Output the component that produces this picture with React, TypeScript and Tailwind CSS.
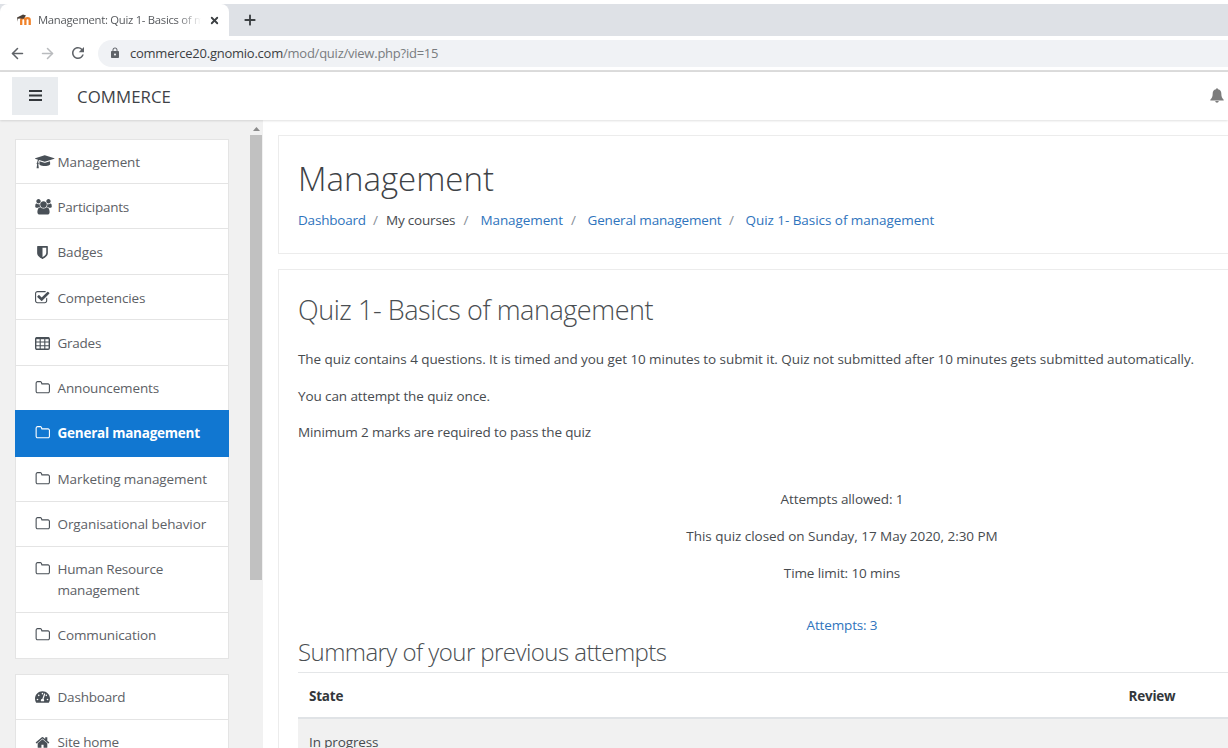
import React from "react";
import { FaTachometerAlt } from "react-icons/fa";
import { ArrowLeft, ArrowRight, X, Plus } from "lucide-react";
import { MdRefresh, MdLock } from "react-icons/md";

const folder =
  "M1600 1312v-704q0-40-28-68t-68-28h-704q-40 0-68-28t-28-68v-64q0-40-28-68t-68-28h-320q-40 0-68 28t-28 68v960q0 40 28 68t68 28h1216q40 0 68-28t28-68zm128-704v704q0 92-66 158t-158 66h-1216q-92 0-158-66t-66-158v-960q0-92 66-158t158-66h320q92 0 158 66t66 158v32h672q92 0 158 66t66 158z";
const cap =
  "M1774 836l18 316q4 69-82 128t-235 93.5-323 34.5-323-34.5-235-93.5-82-128l18-316 574 181q22 7 48 7t48-7zm530-324q0 23-22 31l-1120 352q-4 1-10 1t-10-1l-652-206q-43 34-71 111.5t-34 178.5q63 36 63 109 0 69-58 107l58 433q2 14-8 25-9 11-24 11h-192q-15 0-24-11-10-11-8-25l58-433q-58-38-58-107 0-73 65-111 11-207 98-330l-333-104q-22-8-22-31t22-31l1120-352q4-1 10-1t10 1l1120 352q22 8 22 31z";
const users =
  "M593 896q-162 5-265 128h-134q-82 0-138-40.5t-56-118.5q0-353 124-353 6 0 43.5 21t97.5 42.5 119 21.5q67 0 133-23-5 37-5 66 0 139 81 256zm1071 637q0 120-73 189.5t-194 69.5h-874q-121 0-194-69.5t-73-189.5q0-53 3.5-103.5t14-109 26.5-108.5 43-97.5 62-81 85.5-53.5 111.5-20q10 0 43 21.5t73 48 107 48 135 21.5 135-21.5 107-48 73-48 43-21.5q61 0 111.5 20t85.5 53.5 62 81 43 97.5 26.5 108.5 14 109 3.5 103.5zm-1024-1277q0 106-75 181t-181 75-181-75-75-181 75-181 181-75 181 75 75 181zm704 384q0 159-112.5 271.5t-271.5 112.5-271.5-112.5-112.5-271.5 112.5-271.5 271.5-112.5 271.5 112.5 112.5 271.5zm576 225q0 78-56 118.5t-138 40.5h-134q-103-123-265-128 81-117 81-256 0-29-5-66 66 23 133 23 59 0 119-21.5t97.5-42.5 43.5-21q124 0 124 353zm-128-609q0 106-75 181t-181 75-181-75-75-181 75-181 181-75 181 75 75 181z";
const shield =
  "M1344 960v-640h-448v1137q119-63 213-137 235-184 235-360zm192-768v768q0 86-33.5 170.5t-83 150-118 127.5-126.5 103-121 77.5-89.5 49.5-42.5 20q-12 6-26 6t-26-6q-16-7-42.5-20t-89.5-49.5-121-77.5-126.5-103-118-127.5-83-150-33.5-170.5v-768q0-26 19-45t45-19h1152q26 0 45 19t19 45z";
const check =
  "M1472 930v318q0 119-84.5 203.5t-203.5 84.5h-832q-119 0-203.5-84.5t-84.5-203.5v-832q0-119 84.5-203.5t203.5-84.5h832q63 0 117 25 15 7 18 23 3 17-9 29l-49 49q-10 10-23 10-3 0-9-2-23-6-45-6h-832q-66 0-113 47t-47 113v832q0 66 47 113t113 47h832q66 0 113-47t47-113v-254q0-13 9-22l64-64q10-10 23-10 6 0 12 3 20 8 20 29zm231-489l-814 814q-24 24-57 24t-57-24l-430-430q-24-24-24-57t24-57l110-110q24-24 57-24t57 24l263 263 647-647q24-24 57-24t57 24l110 110q24 24 24 57t-24 57z";
const home =
  "M1472 992v480q0 26-19 45t-45 19h-384v-384h-256v384h-384q-26 0-45-19t-19-45v-480q0-1 .5-3t.5-3l575-474 575 474q1 2 1 6zm223-69l-62 74q-8 9-21 11h-3q-13 0-21-7l-692-577-692 577q-12 8-24 7-13-2-21-11l-62-74q-8-10-7-23.5t11-21.5l719-599q32-26 76-26t76 26l244 204v-195q0-14 9-23t23-9h192q14 0 23 9t9 23v408l219 182q10 8 11 21.5t-7 23.5z";

function Glyph({ d, box, cls }: { d: string; box: string; cls: string }) {
  return (
    <svg viewBox={box} className={cls} fill="currentColor">
      <path d={d} />
    </svg>
  );
}

const Folder = () => <Glyph d={folder} box="0 0 1728 1792" cls="w-[15px] h-[15.5px]" />;

const Table = () => (
  <svg viewBox="0 0 15 13" className="w-[15px] h-[13px]" fill="none" stroke="currentColor">
    <rect x="0.7" y="0.7" width="13.6" height="11.6" rx="1.2" strokeWidth="1.4" />
    <path d="M1 1.2h13" strokeWidth="2" />
    <path d="M1 5h13M1 8.7h13M5.2 1v11M9.8 1v11" strokeWidth="1.1" />
  </svg>
);

type Item = { label: React.ReactNode; icon: React.ReactNode; row: string; track: string; active?: boolean };

const courseNav: Item[] = [
  { label: "Management", icon: <Glyph d={cap} box="0 0 2304 1792" cls="w-[19.5px] h-[15.5px]" />, row: "h-[44px] pt-[12px]", track: "tracking-[-0.1px]" },
  { label: "Participants", icon: <Glyph d={users} box="0 0 1920 1792" cls="w-[17px] h-[15.5px]" />, row: "h-[45px] pt-[13px]", track: "tracking-[-0.25px]" },
  { label: "Badges", icon: <Glyph d={shield} box="0 0 1792 1792" cls="w-[15px] h-[15px]" />, row: "h-[46px] pt-[13px]", track: "tracking-[-0.1px]" },
  { label: "Competencies", icon: <Glyph d={check} box="64 0 1728 1792" cls="w-[15px] h-[15.5px]" />, row: "h-[45px] pt-[13px]", track: "tracking-[-0.15px]" },
  { label: "Grades", icon: <Table />, row: "h-[46px] pt-[13px]", track: "tracking-[-0.25px]" },
  { label: "Announcements", icon: <Folder />, row: "h-[45px] pt-[12px]", track: "tracking-[-0.15px]" },
  { label: "General management", icon: <Folder />, row: "h-[47px] pt-[13px]", track: "tracking-[-0.23px]", active: true },
  { label: "Marketing management", icon: <Folder />, row: "h-[45px] pt-[12px]", track: "tracking-[-0.08px]" },
  { label: "Organisational behavior", icon: <Folder />, row: "h-[45px] pt-[12px]", track: "tracking-[-0.1px]" },
  { label: <>Human Resource<br />management</>, icon: <Folder />, row: "h-[66px] pt-[12px]", track: "tracking-[-0.2px]" },
  { label: "Communication", icon: <Folder />, row: "h-[46px] pt-[12px]", track: "tracking-[-0.12px]" },
];

const siteNav: Item[] = [
  { label: "Dashboard", icon: <FaTachometerAlt className="w-[15px] h-[14px]" />, row: "h-[45px] pt-[12px]", track: "tracking-[-0.2px]" },
  { label: "Site home", icon: <Glyph d={home} box="0 0 1792 1792" cls="w-[15px] h-[15px]" />, row: "h-[46px] pt-[12px]", track: "tracking-[-0.2px]" },
];

function NavList({ items }: { items: Item[] }) {
  return (
    <ul className="w-[214px] shrink-0 border-t border-[#e4e4e4]">
      {items.map((it, i) => (
        <li
          key={i}
          className={`flex items-start border-x border-b pl-[19px] text-[13.5px] leading-[21px] ${it.row} ${
            it.active
              ? "-mt-px border-[#1177d1] bg-[#1177d1] font-bold text-white"
              : "border-[#e4e4e4] bg-white text-[#5d6166]"
          }`}
        >
          <span className={`flex h-[20px] w-[22.5px] items-center ${it.active ? "" : "text-[#495057]"}`}>{it.icon}</span>
          <span className={`whitespace-nowrap ${it.track}`}>{it.label}</span>
        </li>
      ))}
    </ul>
  );
}

function Browser() {
  return (
    <header className="shrink-0">
      <div className="flex h-[36px] border-t-4 border-white bg-[#dee1e6]">
        <div className="flex w-[229px] items-center rounded-t-lg bg-white pl-[17px]">
          <svg viewBox="0 0 15 12" className="h-[12px] w-[15px]">
            <path d="M4.2 11V6.2a2.1 2.1 0 0 1 4.2 0V11M8.4 6.2a2.1 2.1 0 0 1 4.3 0V11" fill="none" stroke="#f08128" strokeWidth="2.3" />
            <path d="M0 3.6 6 .6l3 .8-2.4 3.4-3.6-.4-2 .4v3" fill="#4b4038" />
          </svg>
          <span className="ml-[6px] w-[163px] overflow-hidden whitespace-nowrap bg-gradient-to-r from-[#505357] from-85% to-white bg-clip-text text-[11.3px] tracking-[-0.29px] text-transparent">
            Management: Quiz 1- Basics of management
          </span>
          <X className="ml-[8px] h-[11px] w-[11px] text-[#3c4043]" strokeWidth={4} />
        </div>
        <Plus className="ml-[13px] mt-[8px] h-[16px] w-[16px] text-[#3c4043]" strokeWidth={2.8} />
      </div>
      <div className="flex h-[36px] items-center border-b-2 border-[#dcdcdc] bg-white pl-[9px]">
        <ArrowLeft className="h-[17px] w-[17px] text-[#5f6368]" strokeWidth={2.2} />
        <ArrowRight className="ml-[13px] h-[17px] w-[17px] text-[#b9bbbe]" strokeWidth={2.2} />
        <MdRefresh className="ml-[13px] h-[18px] w-[18px] text-[#5f6368]" />
        <div className="ml-[11px] flex h-[27px] flex-1 items-center rounded-l-full bg-[#f0f2f5] pl-[11px]">
          <MdLock className="h-[12px] w-[12px] text-[#5f6368]" />
          <span className="ml-[9px] mt-px text-[13px] tracking-[-0.24px] text-[#797c80]">
            <span className="text-[#3c4043]">commerce20.gnomio.com</span>/mod/quiz/view.php?id=15
          </span>
        </div>
      </div>
    </header>
  );
}

export default function App() {
  return (
    <div className="flex h-[748px] w-[1228px] flex-col overflow-hidden bg-white font-['Open_Sans','Noto_Sans',sans-serif] text-[13.5px] text-[#474b4f]">
      <Browser />
      <nav className="relative z-10 flex h-[48px] shrink-0 items-center bg-white pl-[12px] shadow-[0_1px_2px_rgba(0,0,0,0.12)]">
        <div className="flex h-[38px] w-[46px] items-center justify-center bg-[#e9ecef]">
          <svg viewBox="0 0 13 11" className="mb-[2px] h-[11px] w-[13px]" stroke="#33373b" strokeWidth="2">
            <path d="M0 1h13M0 5.5h13M0 10h13" />
          </svg>
        </div>
        <span className="ml-[19px] mt-[2px] text-[16.8px] tracking-[0.08px] text-[#3e4246]">COMMERCE</span>
        <svg viewBox="0 0 14 15" className="mb-px ml-auto mr-[4px] h-[15px] w-[14px]" fill="#7c7c7c">
          <path d="M7 .3c.6 0 1 .3 1 .9C10.300 1.700 11.300 3.400 11.300 5.300c0 3.600.8 5.100 2.400 6.400v.9H.3v-.9c1.600-1.300 2.400-2.800 2.400-6.400C2.700 3.400 3.700 1.700 6 1.200 6 .6 6.400.3 7 .3ZM5.300 13h3.400c0 1-.8 1.700-1.700 1.700S5.300 14 5.300 13Z" />
        </svg>
      </nav>
      <div className="flex min-h-0 flex-1">
        <aside className="flex w-[263px] shrink-0 overflow-hidden bg-[#f1f1f1]">
          <div className="flex w-[249px] flex-col gap-[15px] pl-[15px] pt-[19px]">
            <NavList items={courseNav} />
            <NavList items={siteNav} />
          </div>
          <div className="flex w-[14px] flex-col items-center pt-[7px]">
            <svg viewBox="0 0 7 4" className="h-[4px] w-[7px]" fill="#8b8b8b">
              <path d="M3.500 0 7 4H0Z" />
            </svg>
            <div className="mt-[4px] h-[445px] w-[12px] bg-[#c1c1c1]" />
          </div>
        </aside>
        <main className="flex min-w-0 flex-1 flex-col gap-[15px] pl-[15px] pt-[15px]">
          <section className="h-[119px] shrink-0 border border-r-0 border-[#ececec] pl-[19px] pt-[22px]">
            <h1 className="text-[33px] font-light leading-[42px] tracking-[0px] text-[#3e4246]">Management</h1>
            <div className="mt-[10px] flex whitespace-nowrap leading-[21px] tracking-[-0.2px] text-[#2f74bd]">
              <span className="w-[75px]">Dashboard</span>
              <span className="w-[13px] text-[#868e96]">/</span>
              <span className="w-[77.5px] text-[#474b4f]">My courses</span>
              <span className="w-[17px] text-[#868e96]">/</span>
              <span className="w-[90.5px] tracking-[-0.1px]">Management</span>
              <span className="w-[16.5px] text-[#868e96]">/</span>
              <span className="w-[141.5px] tracking-[-0.17px]">General management</span>
              <span className="w-[16.5px] text-[#868e96]">/</span>
              <span className="tracking-[-0.05px]">Quiz 1- Basics of management</span>
            </div>
          </section>
          <section className="h-[520px] shrink-0 border border-r-0 border-[#ececec] pl-[19px] pt-[22px]">
            <h2 className="text-[27px] font-light leading-[36px] tracking-[-0.44px] text-[#4a4e52]">Quiz 1- Basics of management</h2>
            <div className="mt-[21px] flex flex-col gap-[15.6px] whitespace-nowrap leading-[21px]">
              <p className="tracking-[-0.07px]">
                The quiz contains 4 questions. It is timed and you get 10 minutes to submit it. Quiz not submitted after 10 minutes gets submitted automatically.
              </p>
              <p className="tracking-[-0.1px]">You can attempt the quiz once.</p>
              <p className="tracking-[-0.13px]">Minimum 2 marks are required to pass the quiz</p>
            </div>
            <div className="mt-[45.8px] flex w-[1088px] flex-col items-center gap-[16px] whitespace-nowrap leading-[21px]">
              <p className="tracking-[-0.1px]">Attempts allowed: 1</p>
              <p className="tracking-[-0.04px]">This quiz closed on Sunday, 17 May 2020, 2:30 PM</p>
              <p className="tracking-[-0.12px]">Time limit: 10 mins</p>
            </div>
            <p className="mt-[31px] w-[1088px] text-center leading-[21px] tracking-[-0.15px] text-[#2f74bd]">Attempts: 3</p>
            <h3 className="text-[24px] font-light leading-[32px] tracking-[-0.56px] text-[#4a4e52]">Summary of your previous attempts</h3>
            <div className="mt-[4px] border-t border-[#e4e6e8]">
              <div className="flex h-[46px] items-center border-b-2 border-[#e0e3e6] pl-[11px] pt-[2px] font-bold tracking-[-0.23px] text-[#33373b]">
                <span className="w-[819.5px]">State</span>
                <span>Review</span>
              </div>
              <div className="h-[60px] bg-[#f1f1f1] pl-[11px] pt-[13px] leading-[21px] tracking-[-0.12px]">In progress</div>
            </div>
          </section>
        </main>
      </div>
    </div>
  );
}
